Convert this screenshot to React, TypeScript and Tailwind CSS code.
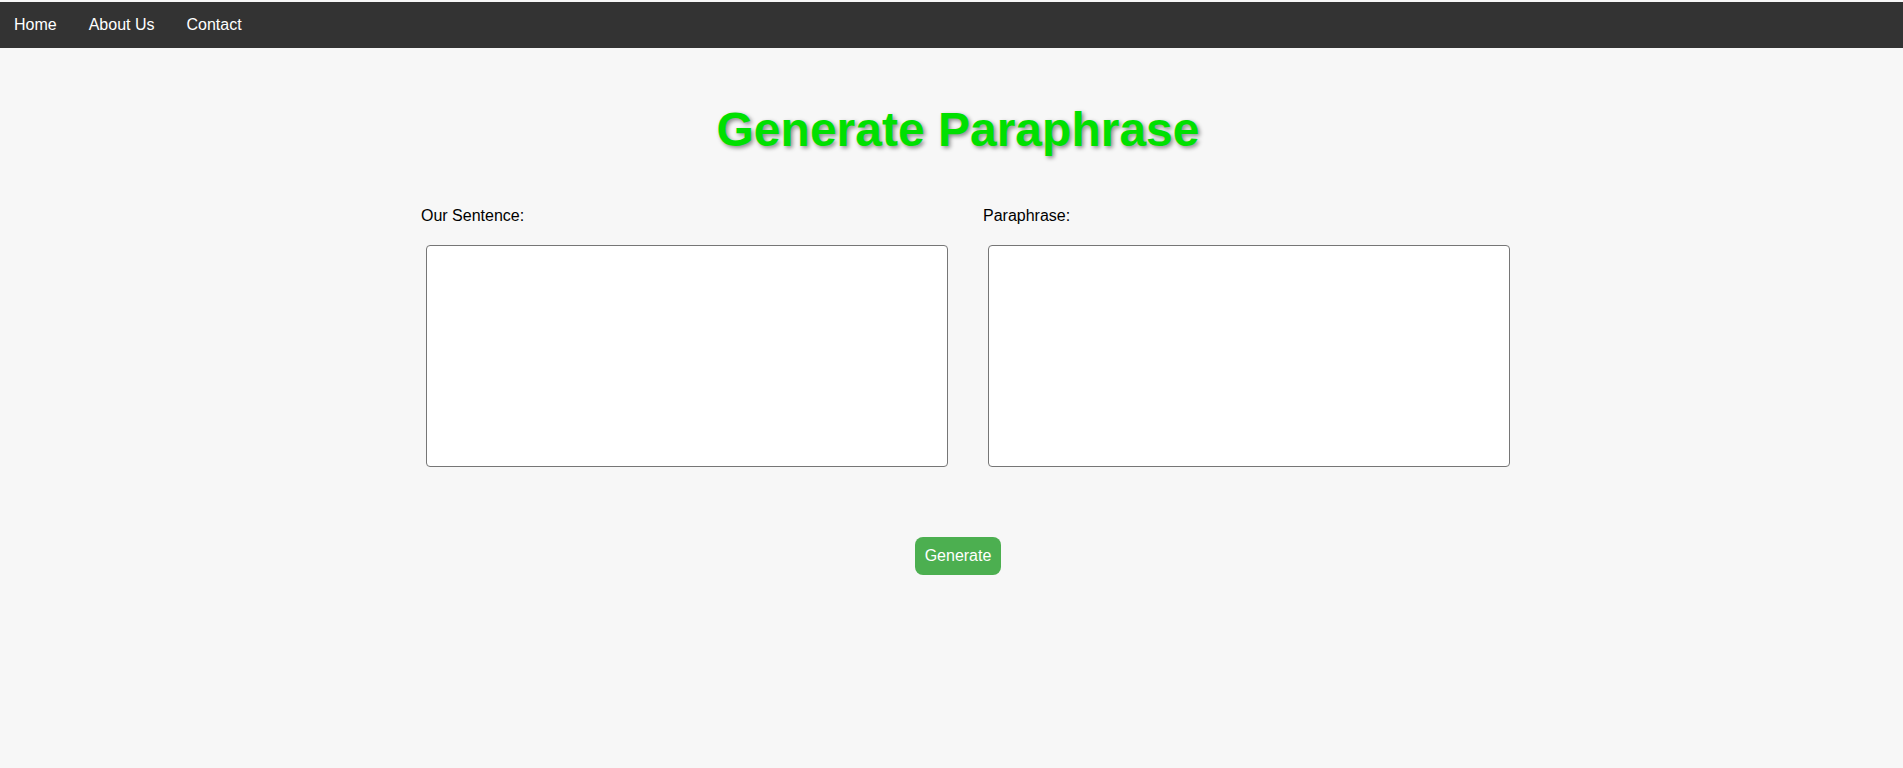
import { useState } from "react";

function App() {
  const [sentence, setSentence] = useState("");
  const [paraphrase, setParaphrase] = useState("");

  return (
    <div className="min-h-screen bg-[#f7f7f7] pt-[2px] font-['Liberation_Sans',Arial,sans-serif] text-black">
      {/* top nav */}
      <nav className="bg-[#333333] flex">
        <a href="#" className="pl-[14px] pr-4 py-[14px] text-[16px] leading-[18px] text-white">
          Home
        </a>
        <a href="#" className="px-4 py-[14px] text-[16px] leading-[18px] text-white">
          About Us
        </a>
        <a href="#" className="px-4 py-[14px] text-[16px] leading-[18px] text-white">
          Contact
        </a>
      </nav>

      <div className="pl-[13px]">
        <h1 className="mt-[54px] text-center text-[48px] leading-[55px] font-bold text-[#00e000] [text-shadow:2px_2px_4px_rgba(0,0,0,0.45)]">
          Generate Paraphrase
        </h1>
      </div>

      <div className="mt-[50px] ml-[421px] flex">
        <div className="w-[527px]">
          <label className="block text-[16px] leading-[18px]">Our Sentence:</label>
          <textarea
            value={sentence}
            onChange={(e) => setSentence(e.target.value)}
            className="mt-[20px] ml-[5px] block w-[522px] h-[222px] bg-white border border-[#767676] rounded-[4px] resize-none outline-none"
          />
        </div>
        <div className="ml-[35px] w-[527px]">
          <label className="block text-[16px] leading-[18px]">Paraphrase:</label>
          <textarea
            value={paraphrase}
            onChange={(e) => setParaphrase(e.target.value)}
            className="mt-[20px] ml-[5px] block w-[522px] h-[222px] bg-white border border-[#767676] rounded-[4px] resize-none outline-none"
          />
        </div>
      </div>

      <div className="mt-[70px] pl-[13px] flex justify-center">
        <button
          onClick={() => setParaphrase(sentence)}
          className="bg-[#4caf50] text-white text-[16px] leading-[18px] px-[10px] py-[10px] rounded-[8px]"
        >
          Generate
        </button>
      </div>
    </div>
  );
}

export default App;
